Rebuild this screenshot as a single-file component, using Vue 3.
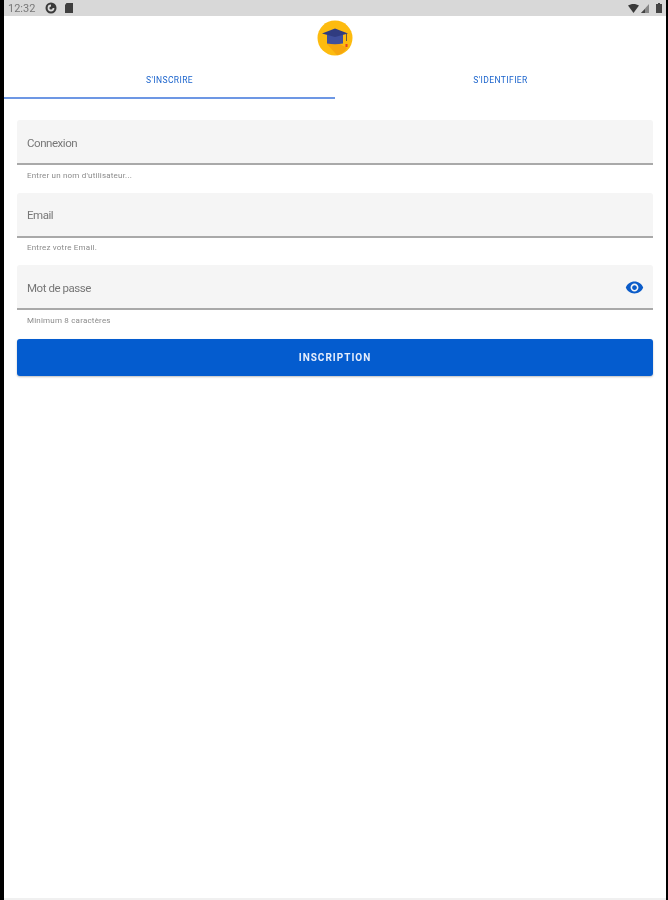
<template>
  <div class="screen">
    <header class="status">
      <div class="status-left">
        <span class="time">12:32</span>
        <svg class="s-ic" width="12" height="12" viewBox="0 0 12 12"><circle cx="6" cy="6" r="5.5" fill="#3a3a3a"/><path d="M6 2.600a3.400 3.400 0 1 0 3.400 3.400H6z" fill="#d8d8d8"/><circle cx="6" cy="6" r="1.600" fill="#3a3a3a"/></svg>
        <svg class="s-ic" width="10" height="12" viewBox="0 0 10 12"><path d="M2.500 1H9v10H1V3z" fill="#3f3f3f"/></svg>
      </div>
      <div class="status-right">
        <svg width="11" height="9" viewBox="0 0 11 9"><path d="M0 1.600C3-.5 8-.5 11 1.600L5.500 9z" fill="#3a3a3a"/></svg>
        <svg class="s-signal" width="8" height="9" viewBox="0 0 8 9"><path d="M8 0v9H0z" fill="#888"/><path d="M4 5v4H0z" fill="#444"/></svg>
        <svg width="6" height="10" viewBox="0 0 6 10"><path d="M2 0h2v1h2v9H0V1h2z" fill="#444"/></svg>
      </div>
    </header>

    <main class="page">
      <div class="logo-row">
        <svg width="36" height="36" viewBox="0 0 36 36">
          <circle cx="18" cy="18" r="17.500" fill="#fdbb0f"/>
          <path d="M10 17 L30 28 A17.500 17.500 0 0 1 20 35.300 L10 24z" fill="#f6a60e"/>
          <path d="M10 15h16v8.500q-8 1.600-16 0z" fill="#3f4f9c"/>
          <path d="M18 8.500 L31 13.500 18 17 5 13.500z" fill="#303c80"/>
          <rect x="29" y="14" width="1" height="7" fill="#6b5a3a"/>
          <rect x="28.500" y="24" width="2" height="3" fill="#e5432a"/>
        </svg>
      </div>

      <nav class="tabs">
        <div class="tab active">S'INSCRIRE</div>
        <div class="tab">S'IDENTIFIER</div>
      </nav>

      <form class="form" @submit.prevent>
        <div class="group" v-for="f in fields" :key="f.label">
          <div class="field">
            <span class="label">{{ f.label }}</span>
            <svg v-if="f.eye" class="eye" width="19" height="19" viewBox="0 0 24 24"><path fill="#0b5cc9" d="M12 4.500C7 4.500 2.730 7.610 1 12c1.730 4.390 6 7.500 11 7.500s9.270-3.110 11-7.500c-1.730-4.390-6-7.500-11-7.500zM12 17c-2.760 0-5-2.240-5-5s2.240-5 5-5 5 2.240 5 5-2.240 5-5 5zm0-8c-1.660 0-3 1.340-3 3s1.340 3 3 3 3-1.340 3-3-1.340-3-3-3z"/></svg>
          </div>
          <div class="help">{{ f.help }}</div>
        </div>
        <button class="submit" type="submit">INSCRIPTION</button>
      </form>
    </main>
  </div>
</template>

<script setup>
const fields = [
  { label: 'Connexion', help: "Entrer un nom d'utilisateur..." },
  { label: 'Email', help: 'Entrez votre Email.' },
  { label: 'Mot de passe', help: 'Minimum 8 caractères', eye: true }
]
</script>

<style>
html, body { margin: 0; background: #000; }
</style>

<style scoped>
.screen {
  width: 668px;
  height: 900px;
  box-sizing: border-box;
  display: flex;
  flex-direction: column;
  background: #fff;
  border-left: 4px solid #000;
  border-right: 2px solid #000;
  font-family: Roboto, "Liberation Sans", sans-serif;
  overflow: hidden;
}
.status {
  height: 16px;
  flex: none;
  background: #d8d8d8;
  display: flex;
  justify-content: space-between;
  align-items: center;
  margin-left: -4px;
  padding: 0 1px 0 8px;
  filter: blur(0.5px);
}
.status-left { display: flex; align-items: center; }
.time { font-size: 11px; color: #777; width: 37px; }
.s-ic { margin-right: 7px; }
.status-right { display: flex; align-items: center; gap: 2px; padding-right: 3px; }
.s-signal { margin-right: 5px; }
.page {
  flex: 1;
  display: flex;
  flex-direction: column;
  border-bottom: 2px solid #f0f0f0;
  filter: blur(0.45px);
}
.logo-row { height: 42px; padding-top: 4px; box-sizing: border-box; display: flex; justify-content: center; margin-left: -1px; }
.logo-row svg { display: block; }
.tabs { display: flex; height: 41px; }
.tab {
  flex: 1;
  display: flex;
  align-items: center;
  justify-content: center;
  box-sizing: border-box;
  font-size: 8.500px;
  font-weight: 400;
  letter-spacing: 0.4px;
  color: #1a63cc;
  padding-top: 3px;
}
.tab.active { border-bottom: 2px solid #6d97e4; padding-top: 5px; }
.form { padding: 21px 13px 0; display: flex; flex-direction: column; }
.group { height: 72.670px; }
.field {
  height: 45px;
  box-sizing: border-box;
  background: #f5f5f5;
  border-bottom: 2px solid #a9a9a9;
  border-radius: 3px 3px 0 0;
  padding: 2px 10px 0;
  display: flex;
  align-items: center;
  justify-content: space-between;
}
.label { font-size: 11.500px; letter-spacing: -0.45px; color: #777; }
.eye { display: block; margin-right: -1px; }
.help { font-size: 8px; color: #8a8a8a; padding: 5.500px 10px 0; line-height: 10px; letter-spacing: 0.2px; }
.submit {
  height: 37px;
  margin-top: 1px;
  border: 0;
  border-radius: 3px;
  background: #045ccf;
  color: #e6eefc;
  font-family: inherit;
  font-size: 10px;
  font-weight: 700;
  letter-spacing: 1px;
  box-shadow: 0 1px 2px rgba(0,0,0,.25);
}
</style>
